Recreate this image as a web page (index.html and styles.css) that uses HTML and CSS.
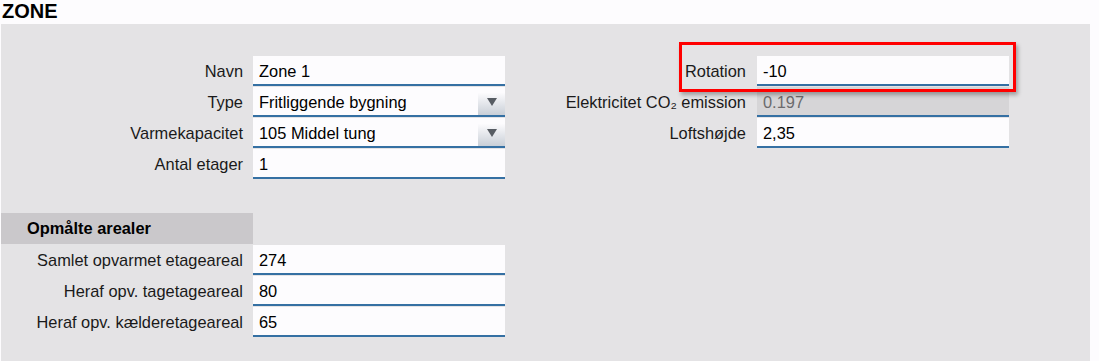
FILE: index.html
```html
<!DOCTYPE html>
<html>
<head>
<meta charset="utf-8"/>
<title>Zone</title>
<link rel="stylesheet" href="styles.css">
</head>
<body>
<h1 class="title">ZONE</h1>

<div class="panel">
  <div class="top">
    <div class="form left">
      <div class="label">Navn</div>
      <div class="field">Zone 1</div>

      <div class="label">Type</div>
      <div class="field select">Fritliggende bygning<span class="arrow"></span></div>

      <div class="label">Varmekapacitet</div>
      <div class="field select">105 Middel tung<span class="arrow"></span></div>

      <div class="label">Antal etager</div>
      <div class="field">1</div>
    </div>

    <div class="form right">
      <div class="label">Rotation</div>
      <div class="field">-10</div>

      <div class="label">Elektricitet CO₂ emission</div>
      <div class="field disabled">0.197</div>

      <div class="label">Loftshøjde</div>
      <div class="field">2,35</div>

      <div class="highlight"></div>
    </div>
  </div>

  <div class="section-head">Opmålte arealer</div>
  <div class="form left">
    <div class="label">Samlet opvarmet etageareal</div>
    <div class="field">274</div>

    <div class="label">Heraf opv. tagetageareal</div>
    <div class="field">80</div>

    <div class="label">Heraf opv. kælderetageareal</div>
    <div class="field">65</div>
  </div>
</div>
</body>
</html>
```

FILE: styles.css
```css
body {
   margin: 0;
   padding: 0 0 0 1px;
   background-color: #fdfcfe;
   font-family: "Liberation Sans", Arial, sans-serif;
   font-size: 16.4px;
   color: #111;
}

.title {
   margin: 0;
   padding: 1px 0 0 1px;
   height: 23px;
   font-size: 20px;
   line-height: 21px;
   font-weight: bold;
   color: #000;
}

.panel {
   width: 1089px;
   height: 337px;
   background-color: #e4e3e5;
   padding-top: 32px;
   box-sizing: border-box;
}

.top {
   display: flex;
   height: 157px;
}

.form {
   display: grid;
   grid-auto-rows: 30px;
   row-gap: 1px;
   align-items: center;
}

.form.left {
   grid-template-columns: 242px 252px;
   column-gap: 10px;
}

.form.right {
   position: relative;
   grid-template-columns: 241px 252px;
   column-gap: 11px;
   align-content: start;
}

.label {
   padding-top: 1px;
   text-align: right;
   white-space: nowrap;
   color: #1a1a1a;
}

.field {
   position: relative;
   height: 30px;
   box-sizing: border-box;
   padding: 5px 0 0 6px;
   background-color: #fdfcfe;
   border-bottom: 2px solid #3570a3;
   color: #000;
   line-height: 20px;
}

.field.disabled {
   background-color: #d6d5d7;
   color: #6b6b6d;
}

.arrow {
   position: absolute;
   top: 0;
   right: 0;
   width: 27px;
   height: 28px;
   background: linear-gradient(#fdfcfe 20%, #c9cfd7);
}

.arrow::after {
   content: "";
   position: absolute;
   left: 9px;
   top: 11px;
   border-left: 5px solid transparent;
   border-right: 5px solid transparent;
   border-top: 8px solid #575c63;
}

.highlight {
   position: absolute;
   left: 174px;
   top: -14px;
   width: 337px;
   height: 50px;
   box-sizing: border-box;
   border: 3px solid #f00;
   box-shadow: 2px 3px 4px rgba(0, 0, 0, 0.3);
}

.section-head {
   width: 252px;
   height: 31px;
   margin-bottom: 1px;
   padding-left: 26px;
   box-sizing: border-box;
   background-color: #cac8cb;
   font-weight: bold;
   line-height: 31px;
   color: #000;
}
```
